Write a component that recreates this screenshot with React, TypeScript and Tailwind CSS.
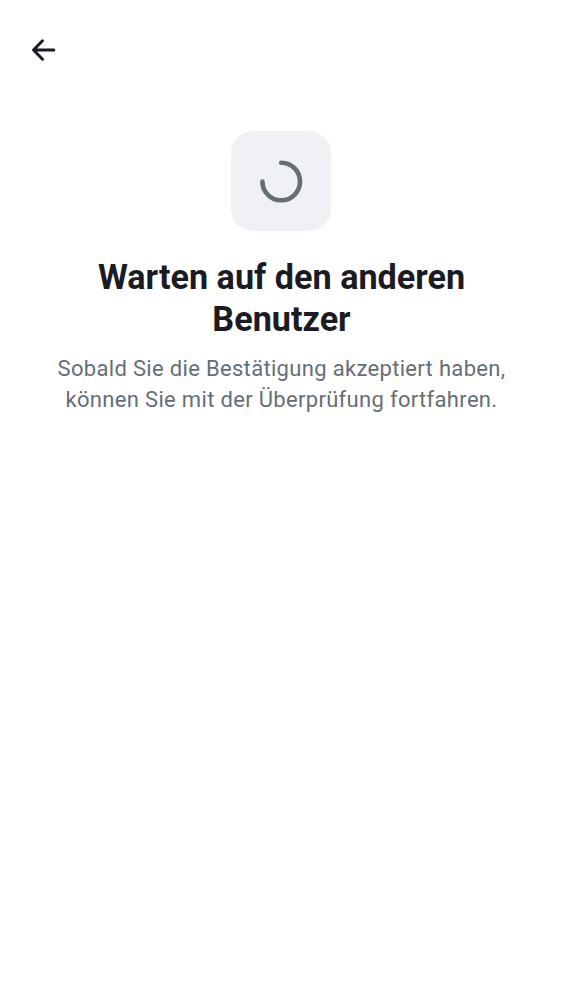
export default function App() {
  return (
    <main className="flex min-h-screen flex-col bg-white font-['Roboto',sans-serif]">
      <header className="flex h-[100px] items-center pl-[31px]">
        <button aria-label="Zurück" className="text-[#1b1b23]">
          <svg width="26" height="26" viewBox="0 0 26 26" fill="none" stroke="currentColor" strokeWidth="3" strokeLinecap="round" strokeLinejoin="round">
            <path d="M22.8 13H2.7M11.5 3.8L2.5 13l9 9.2" />
          </svg>
        </button>
      </header>
      <section className="flex flex-col items-center pt-[31px] text-center">
        <div className="flex size-[100px] items-center justify-center rounded-[22px] bg-[#f0f1f5]">
          <svg width="44" height="44" viewBox="0 0 44 44" fill="none" stroke="#656e77" strokeWidth="4.6" strokeLinecap="round">
            <path d="M22.2 3.7a18.8 18.8 0 1 1-18.8 18.8" />
          </svg>
        </div>
        <h1 className="mt-[25px] pl-px text-[34.2px] leading-[42px] font-bold text-[#1b1b23]">
          Warten auf den anderen<br />Benutzer
        </h1>
        <p className="mt-[13px] pl-px text-[22px] leading-[31px] tracking-[0.32px] text-[#656e77]">
          Sobald Sie die Bestätigung akzeptiert haben,<br />können Sie mit der Überprüfung fortfahren.
        </p>
      </section>
    </main>
  );
}
